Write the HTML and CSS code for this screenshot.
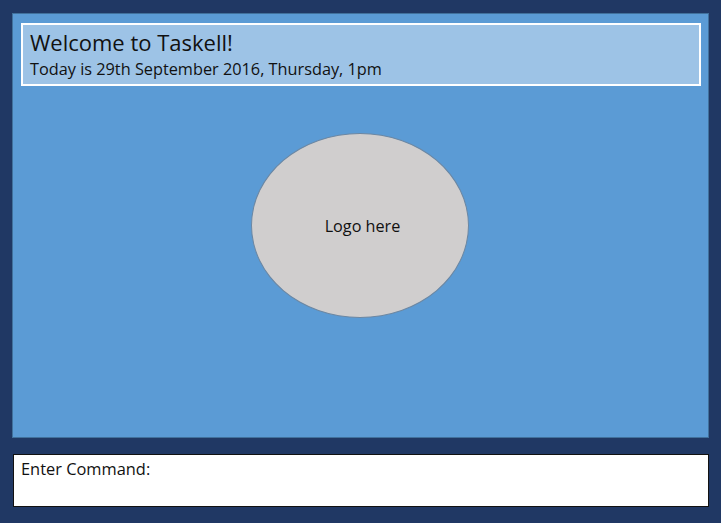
FILE: index.html
```html
<!DOCTYPE html>
<html>
<head>
<meta charset="utf-8">
<link rel="stylesheet" href="styles.css">
</head>
<body>
<div class="app">
  <main class="panel">
    <header class="welcome">
      <h1 class="title">Welcome to Taskell!</h1>
      <p class="date">Today is 29th September 2016, Thursday, 1pm</p>
    </header>
    <div class="logo-area">
      <div class="logo">Logo here</div>
    </div>
  </main>
  <div class="command">Enter Command:</div>
</div>
</body>
</html>
```
FILE: styles.css
```css
html, body {
  margin: 0;
  padding: 0;
}
body {
  background: #203864;
  font-family: "Open Sans", "Liberation Sans", sans-serif;
  color: #111;
  width: 721px;
  height: 523px;
  overflow: hidden;
}
.app {
  box-sizing: border-box;
  height: 523px;
  padding: 13px 12px 16px 12px;
  display: flex;
  flex-direction: column;
  gap: 16px;
}
.panel {
  box-sizing: border-box;
  height: 425px;
  background: #5b9bd5;
  border: 1px solid #41719c;
  padding: 9px 7px 0 8px;
  display: flex;
  flex-direction: column;
}
.welcome {
  box-sizing: border-box;
  height: 63px;
  width: 680px;
  background: #9dc3e6;
  border: 2px solid #ffffff;
  padding: 3px 0 0 7px;
}
.title {
  margin: 0;
  font-weight: 400;
  font-size: 22px;
  line-height: 28px;
}
.date {
  margin: 3px 0 0 0;
  font-size: 16.3px;
  line-height: 21px;
}
.logo-area {
  display: flex;
  justify-content: center;
  padding: 47px 0 0 0;
}
.logo {
  box-sizing: border-box;
  width: 218px;
  height: 185px;
  margin-left: -2px;
  border-radius: 50%;
  background: #d0cece;
  border: 1px solid #6b87a3;
  display: flex;
  align-items: center;
  justify-content: center;
  font-size: 16.2px;
  padding-left: 5px;
}
.command {
  box-sizing: border-box;
  height: 53px;
  background: #ffffff;
  border: 1px solid #111;
  margin-left: 1px;
  padding: 3px 0 0 7px;
  font-size: 16.4px;
  line-height: 22px;
}
```
